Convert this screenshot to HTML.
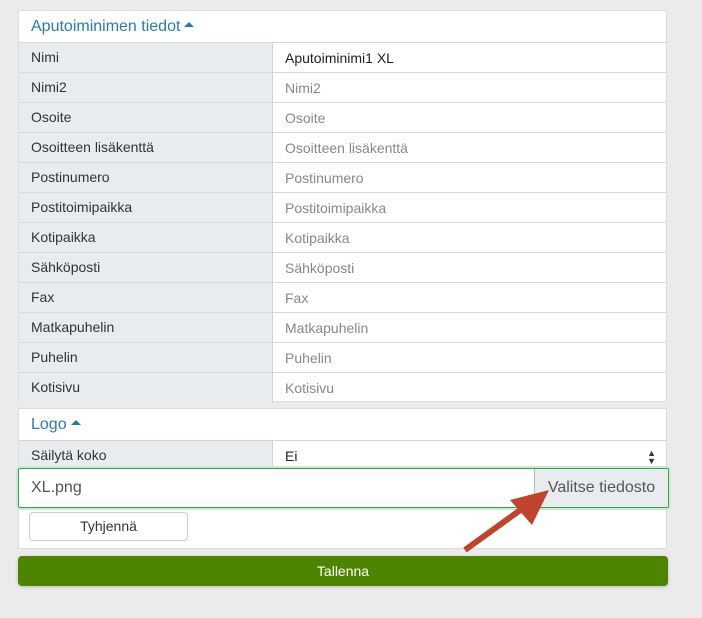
<!DOCTYPE html><html><head><style>
body{margin:0;background:#ebebeb;font-family:"Liberation Sans",sans-serif;font-size:14px;width:702px;height:618px;position:relative;overflow:hidden}
.card{position:absolute;left:18px;width:649px;background:#fff;border:1px solid #dcdcdc;box-sizing:border-box}
.h{height:31px;line-height:31px;padding-left:12px;color:#2a7ab0;font-size:16px;border-bottom:1px solid #d5d5d5}
.r{display:flex;height:30px;border-bottom:1px solid #d8d8d8;box-sizing:border-box}
.l{width:254px;background:#e9ecef;color:#333;padding-left:12px;line-height:29px;border-right:1px solid #d3d3d3;box-sizing:border-box}
.v{flex:1;padding-left:12px;line-height:31px;color:#888}
.tri{display:inline-block;width:0;height:0;border-left:5px solid transparent;border-right:5px solid transparent;border-bottom:5px solid #2a7ab0;vertical-align:middle;margin-left:4px;margin-top:-4px}
</style></head><body>
<div class="card" style="top:10px;height:392px">
<div class="h">Aputoiminimen tiedot<span class="tri"></span></div>
<div class="r"><div class="l">Nimi</div><div class="v" style="color:#222">Aputoiminimi1 XL</div></div>
<div class="r"><div class="l">Nimi2</div><div class="v">Nimi2</div></div>
<div class="r"><div class="l">Osoite</div><div class="v">Osoite</div></div>
<div class="r"><div class="l">Osoitteen lisäkenttä</div><div class="v">Osoitteen lisäkenttä</div></div>
<div class="r"><div class="l">Postinumero</div><div class="v">Postinumero</div></div>
<div class="r"><div class="l">Postitoimipaikka</div><div class="v">Postitoimipaikka</div></div>
<div class="r"><div class="l">Kotipaikka</div><div class="v">Kotipaikka</div></div>
<div class="r"><div class="l">Sähköposti</div><div class="v">Sähköposti</div></div>
<div class="r"><div class="l">Fax</div><div class="v">Fax</div></div>
<div class="r"><div class="l">Matkapuhelin</div><div class="v">Matkapuhelin</div></div>
<div class="r"><div class="l">Puhelin</div><div class="v">Puhelin</div></div>
<div class="r" style="border-bottom:0"><div class="l">Kotisivu</div><div class="v">Kotisivu</div></div>
</div>
<div class="card" style="top:408px;height:141px">
<div class="h">Logo<span class="tri"></span></div>
<div class="r" style="height:29px"><div class="l">Säilytä koko</div><div class="v" style="color:#222;line-height:30px;position:relative">Ei<span style="position:absolute;right:10px;top:0;font-size:9px;line-height:8px;top:8px;color:#333">▲<br>▼</span></div></div>
</div>
<div style="position:absolute;left:18px;top:468px;width:651px;height:40px;border:1px solid #3da14f;box-shadow:0 0 0 2px #c9ecd0;box-sizing:border-box;background:#fff;border-radius:2px">
<span style="position:absolute;left:12px;top:10px;font-size:16px;color:#555">XL.png</span>
<div style="position:absolute;right:0;top:0;width:133px;height:38px;background:#e9ecef;border-left:1px solid #bbb;color:#555;font-size:16px;line-height:38px;text-align:center">Valitse tiedosto</div></div>
<div style="position:absolute;left:29px;top:512px;width:159px;height:29px;border:1px solid #ccc;border-radius:4px;box-sizing:border-box;background:#fff;text-align:center;line-height:27px;color:#333">Tyhjennä</div>
<div style="position:absolute;left:18px;top:556px;width:650px;height:30px;background:#4e8500;border-radius:4px;color:#fff;text-align:center;line-height:30px;box-shadow:0 1px 3px rgba(0,0,0,.2)">Tallenna</div>
<svg style="position:absolute;left:0;top:0" width="702" height="618"><line x1="465" y1="550" x2="530" y2="503" stroke="#c0432b" stroke-width="6"/><polygon points="549,490 510,500 532,525" fill="#c0432b"/></svg>
</body></html>
